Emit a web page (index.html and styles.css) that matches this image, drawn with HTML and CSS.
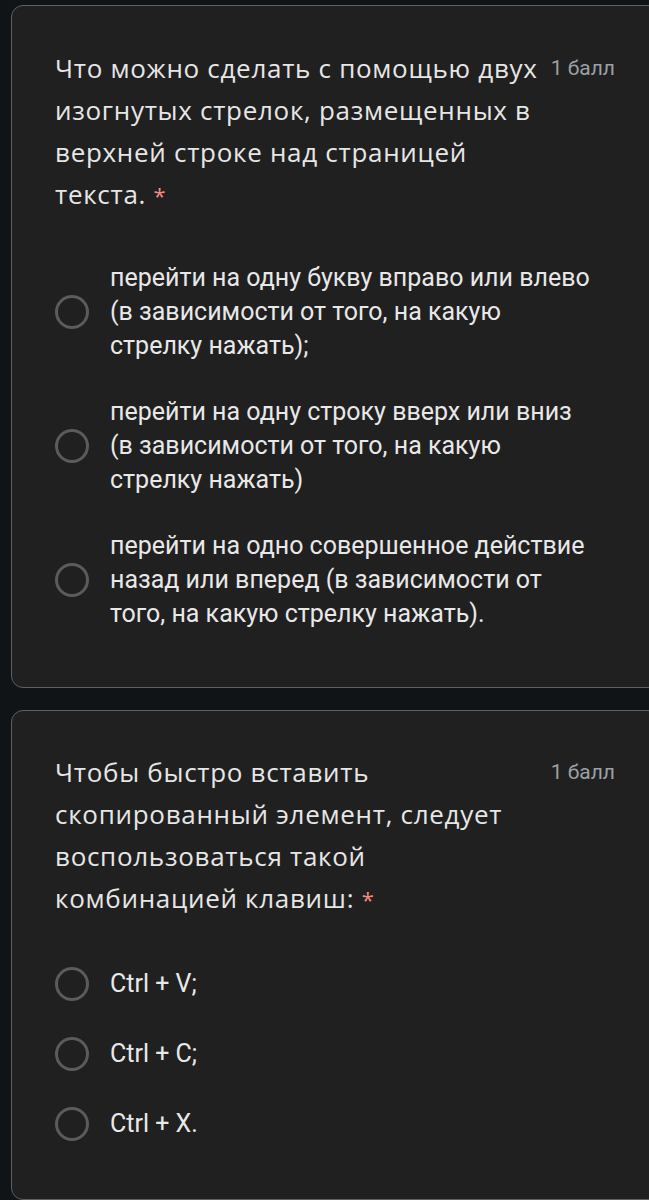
FILE: index.html
```html
<!DOCTYPE html>
<html lang="ru">
<head>
<meta charset="utf-8">
<link rel="stylesheet" href="styles.css">
</head>
<body>
<main class="page">
  <section class="card">
    <div class="head">
      <h2 class="title">Что можно сделать с помощью двух<br>изогнутых стрелок, размещенных в<br>верхней строке над страницей<br>текста. <span class="req">*</span></h2>
      <span class="points">1 балл</span>
    </div>
    <div class="options long">
      <label class="opt"><span class="radio"></span><span class="otext">перейти на одну букву вправо или влево<br>(в зависимости от того, на какую<br>стрелку нажать);</span></label>
      <label class="opt"><span class="radio"></span><span class="otext">перейти на одну строку вверх или вниз<br>(в зависимости от того, на какую<br>стрелку нажать)</span></label>
      <label class="opt"><span class="radio"></span><span class="otext">перейти на одно совершенное действие<br>назад или вперед (в зависимости от<br>того, на какую стрелку нажать).</span></label>
    </div>
  </section>
  <section class="card second">
    <div class="head">
      <h2 class="title">Чтобы быстро вставить<br>скопированный элемент, следует<br>воспользоваться такой<br>комбинацией клавиш: <span class="req">*</span></h2>
      <span class="points">1 балл</span>
    </div>
    <div class="options short">
      <label class="opt"><span class="radio"></span><span class="otext">Ctrl + V;</span></label>
      <label class="opt"><span class="radio"></span><span class="otext">Ctrl + C;</span></label>
      <label class="opt"><span class="radio"></span><span class="otext">Ctrl + X.</span></label>
    </div>
  </section>
</main>
</body>
</html>
```

FILE: styles.css
```css
html, body {
  margin: 0;
  padding: 0;
  background: #101417;
  overflow: hidden;
}
.page {
  display: flex;
  flex-direction: column;
  gap: 22px;
  padding: 5px 0 0 11px;
  width: 650px;
}
.card {
  background: #202020;
  border: 1.5px solid #5c5f63;
  border-radius: 12px;
  padding: 41px 44px 56px 43px;
  width: 560px;
}
.card.second {
  padding-top: 40px;
  padding-bottom: 58px;
}
.head {
  display: flex;
  justify-content: space-between;
  align-items: flex-start;
}
.title {
  margin: 0;
  font-family: "Open Sans", sans-serif;
  font-weight: 400;
  font-size: 26px;
  letter-spacing: 0.7px;
  line-height: 42px;
  color: #e6e6e6;
  white-space: nowrap;
}
.req {
  color: #f28b82;
  font-size: 22px;
}
.points {
  font-family: Roboto, sans-serif;
  font-size: 21px;
  line-height: 42px;
  color: #9aa0a6;
  white-space: nowrap;
}
.options {
  display: flex;
  flex-direction: column;
}
.options.long {
  margin-top: 45px;
  gap: 32px;
}
.options.short {
  margin-top: 47px;
  gap: 36px;
}
.opt {
  display: flex;
  align-items: center;
  gap: 21px;
}
.radio {
  flex: none;
  width: 28px;
  height: 28px;
  border: 3.5px solid #5b5b5b;
  border-radius: 50%;
}
.otext {
  font-family: Roboto, sans-serif;
  font-size: 25px;
  line-height: 34px;
  color: #e8e8e8;
  white-space: nowrap;
}
```
